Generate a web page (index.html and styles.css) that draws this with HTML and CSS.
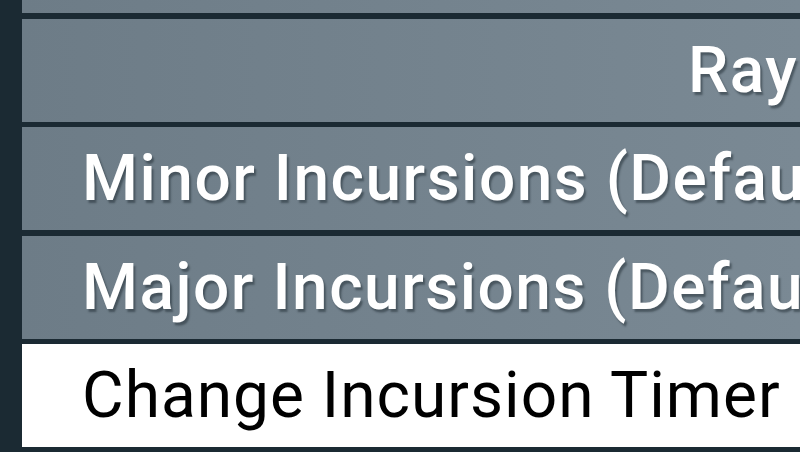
FILE: index.html
```html
<!DOCTYPE html>
<html>
<head>
<meta charset="utf-8">
<link rel="stylesheet" href="styles.css">
</head>
<body>
<div class="menu">
  <div class="row"></div>
  <div class="row row-right"><span class="label">Ray</span></div>
  <div class="row"><span class="label">Minor Incursions (Default)</span></div>
  <div class="row"><span class="label">Major Incursions (Default)</span></div>
  <div class="row selected"><span class="label">Change Incursion Timer</span></div>
</div>
</body>
</html>
```

FILE: styles.css
```css
html, body {
  margin: 0;
  padding: 0;
  width: 800px;
  height: 452px;
  overflow: hidden;
  background: #1b2a33;
}
.menu {
  display: flex;
  flex-direction: column;
  gap: 5.5px;
  padding-left: 22px;
  margin-top: -90px;
}
.row {
  flex: 0 0 103px;
  height: 103px;
  display: flex;
  align-items: center;
  padding-left: 60px;
  background: linear-gradient(to right, #6d7c87, #7a8994);
  white-space: nowrap;
  overflow: hidden;
  font-family: Roboto, "Liberation Sans", sans-serif;
  font-size: 64px;
  font-weight: 500;
  letter-spacing: 1.5px;
  color: #ffffff;
  text-shadow: 2px 3px 2px rgba(20, 30, 38, 0.45);
}
.row-right {
  padding-left: 666px;
}
.selected {
  background: #ffffff;
  color: #000000;
  font-weight: 400;
  letter-spacing: 1px;
  text-shadow: none;
}
```
